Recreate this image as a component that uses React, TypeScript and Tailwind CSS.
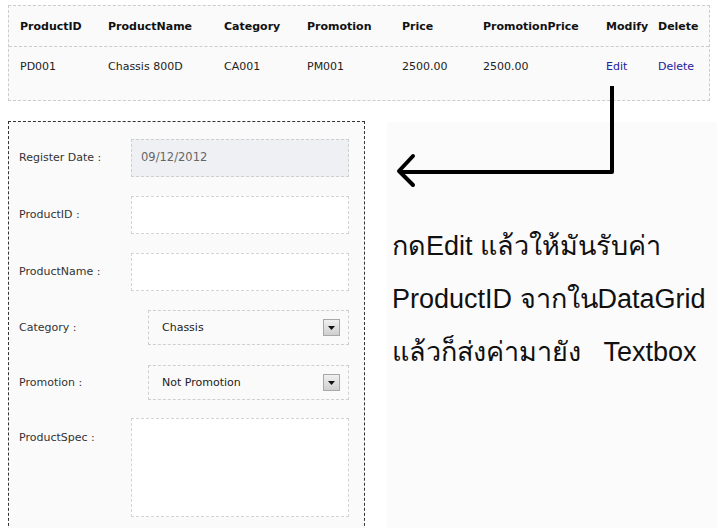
import React from "react";

const cols = "grid grid-cols-[88px_116px_83px_95px_81px_123px_52px_1fr] pl-[11px]";

const headers = ["ProductID", "ProductName", "Category", "Promotion", "Price", "PromotionPrice", "Modify", "Delete"];
const row = ["PD001", "Chassis 800D", "CA001", "PM001", "2500.00", "2500.00"];

function SelectBox({ value }: { value: string }) {
  return (
    <div className="ml-[17px] w-[201px] h-[35px] border border-dashed border-[#cfcfcf] flex items-center justify-between pl-[13px] pr-[8px]">
      <span className="text-[11px] text-[#222] pt-[2px]">{value}</span>
      <div className="w-[17px] h-[17px] border border-[#a8a8a8] bg-gradient-to-b from-[#f0f0f0] to-[#cfcfcf] flex items-center justify-center">
        <svg width="7" height="4" viewBox="0 0 7 4">
          <polygon points="0,0 7,0 3.5,4" fill="#111" />
        </svg>
      </div>
    </div>
  );
}

function Field({ label, children, mt, top }: { label: string; children: React.ReactNode; mt: string; top?: boolean }) {
  return (
    <div className={`flex ${top ? "items-start" : "items-center"} ${mt}`}>
      <div className={`w-[112px] text-[11px] text-[#333] leading-[14px] ${top ? "pt-[13px]" : ""}`}>{label}</div>
      {children}
    </div>
  );
}

export default function App() {
  return (
    <div
      className="relative w-full h-[528px] bg-white overflow-hidden"
      style={{ fontFamily: '"DejaVu Sans", Verdana, sans-serif' }}
    >
      {/* DataGrid */}
      <div className="ml-2 mt-[5px] w-[702px] border border-dashed border-[#cccccc] bg-[#fafafa]">
        <div className={`${cols} items-center h-[40px] pt-[2px] text-[11px] font-bold text-[#111]`}>
          {headers.map((h) => (
            <span key={h}>{h}</span>
          ))}
        </div>
        <div className={`${cols} items-start h-[54px] pt-[13px] border-t border-dashed border-[#cccccc] text-[11px] leading-[14px] text-[#222]`}>
          {row.map((c, i) => (
            <span key={i}>{c}</span>
          ))}
          <span className="text-[#22209c]">Edit</span>
          <span className="text-[#22209c]">Delete</span>
        </div>
      </div>

      <div className="flex mt-[20px]">
        {/* Form */}
        <div className="ml-2 w-[357px] h-[420px] border border-dashed border-[#333] bg-[#fafafa] pl-[10px] pt-[17px]">
          <Field label="Register Date :" mt="mt-0">
            <div className="w-[218px] h-[38px] border border-dashed border-[#cfcfcf] bg-[#eef0f4] flex items-center pl-[9px] text-[11.5px] text-[#666]">
              09/12/2012
            </div>
          </Field>
          <Field label="ProductID :" mt="mt-[19px]">
            <div className="w-[218px] h-[38px] border border-dashed border-[#d4d4d4] bg-white" />
          </Field>
          <Field label="ProductName :" mt="mt-[19px]">
            <div className="w-[218px] h-[38px] border border-dashed border-[#d4d4d4] bg-white" />
          </Field>
          <Field label="Category :" mt="mt-[19px]">
            <SelectBox value="Chassis" />
          </Field>
          <Field label="Promotion :" mt="mt-[20px]">
            <SelectBox value="Not Promotion" />
          </Field>
          <Field label="ProductSpec :" mt="mt-[18px]" top>
            <div className="w-[218px] h-[99px] border border-dashed border-[#d4d4d4] bg-white" />
          </Field>
        </div>

        {/* Note */}
        <div
          className="ml-[22px] flex-1 h-[420px] mt-px bg-[#fbfbfb] pl-[5px] pt-[98px] text-[27px] leading-[53px] text-[#111]"
          style={{ fontFamily: '"Liberation Sans", Arial, sans-serif' }}
        >
          <div>กดEdit แล้วให้มันรับค่า</div>
          <div>ProductID จากในDataGrid</div>
          <div className="whitespace-pre">แล้วก็ส่งค่ามายัง   Textbox</div>
        </div>
      </div>

      {/* Arrow overlay */}
      <svg className="absolute inset-0 pointer-events-none" width="717" height="528">
        <path d="M612 86 V172 H400" fill="none" stroke="#000" strokeWidth="4" strokeLinejoin="round" />
        <path d="M413 156 L399 171 L413 185" fill="none" stroke="#000" strokeWidth="4" strokeLinecap="round" strokeLinejoin="round" />
      </svg>
    </div>
  );
}
